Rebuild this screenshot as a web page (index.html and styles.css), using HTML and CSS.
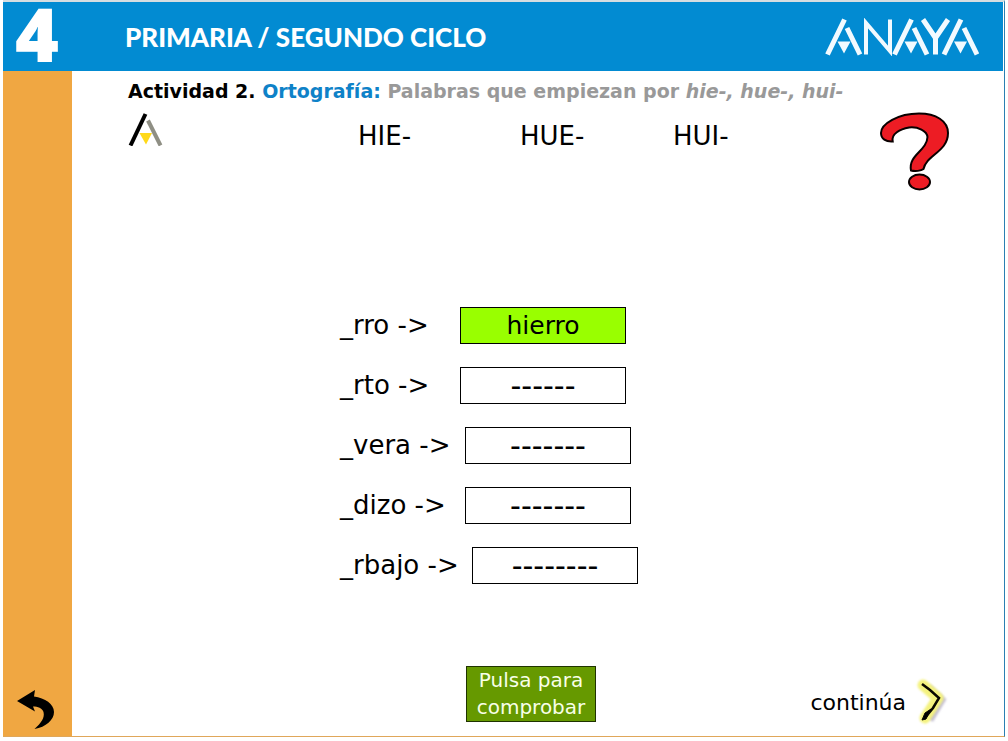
FILE: index.html
```html
<!DOCTYPE html>
<html lang="es">
<head>
<meta charset="utf-8">
<meta name="viewport" content="width=device-width, initial-scale=1">
<title>Primaria / Segundo ciclo - Ortografía</title>
<link rel="stylesheet" href="styles.css">
</head>
<body>
<div class="page">
  <header class="header">
    <span class="grade">4</span>
    <span class="cycle">PRIMARIA / SEGUNDO CICLO</span>
    <svg class="brand" viewBox="0 0 154 38" role="img" aria-label="Anaya">
      <g fill="none" stroke="#f2faff" stroke-width="5">
        <path d="M2.500 36.500 19.500 1.500M22 10 35 36.500"/>
        <path stroke-width="4" d="M41 36.500V5L65 33V1.500"/>
        <path d="M69.500 36.500 86.500 1.500M89 10 102 36.500"/>
        <path d="M98 1.500 110.500 20 123 1.500M110.500 19V36.500"/>
        <path d="M119 36.500 136 1.500M139 10 152 36.500"/>
      </g>
      <path fill="#f2faff" d="M12.500 23.500H25.500L19 35.500ZM79.500 23.500H92.500L86 35.500ZM129 23.500H142L135.500 35.500Z"/>
    </svg>
  </header>
  <div class="body">
    <nav class="side">
      <a href="#volver" aria-label="Volver">
        <svg class="back" viewBox="0 0 38 40">
          <path d="M3 11 21 0 20 6.500C31 8 40 14 40 22 40 30 32 37 20.500 39 27 33 31 28 29.500 22 28 18 24 16.500 19 16.500L21 21.500Z"/>
        </svg>
      </a>
    </nav>
    <main class="main">
      <h1 class="title">Actividad 2. <span class="topic">Ortografía:</span> <span class="desc">Palabras que empiezan por <em>hie-, hue-, hui-</em></span></h1>
      <div class="prefixes">
        <svg class="mark" viewBox="0 0 36 34">
          <path d="M2.500 33.500 17.500 2" fill="none" stroke="#000" stroke-width="4"/>
          <path d="M20 8.500 32.500 33.500" fill="none" stroke="#8f8f84" stroke-width="4"/>
          <path d="M11.500 21H24L18 32.500Z" fill="#ffd91a"/>
        </svg>
        <div class="prefix-list">
          <span>HIE-</span>
          <span>HUE-</span>
          <span>HUI-</span>
        </div>
        <button class="help" type="button" aria-label="Ayuda">
          <svg viewBox="0 0 70 80">
            <g fill="#ed1c24" stroke="#0a0000" stroke-width="2">
              <path d="M12.700 29.500C6 30 1 27 1 21 1 12 18 1.500 39 1.500 56 1.500 68 9 68 21 68 40 46 43 43.500 57 41 59 35 59.500 31 58.500 28 43 47 39 47.500 25 47 19 38 14.500 29 15.500 20 17 11 22 12.700 29.500Z"/>
              <ellipse cx="39.500" cy="70" rx="10.500" ry="7.500"/>
            </g>
          </svg>
        </button>
      </div>
      <form class="words">
        <div class="word"><label for="w1">_rro -&gt;</label><input id="w1" class="slot done" readonly value="hierro"></div>
        <div class="word"><label for="w2">_rto -&gt;</label><input id="w2" class="slot" readonly value="------"></div>
        <div class="word medium"><label for="w3">_vera -&gt;</label><input id="w3" class="slot" readonly value="-------"></div>
        <div class="word medium"><label for="w4">_dizo -&gt;</label><input id="w4" class="slot" readonly value="-------"></div>
        <div class="word long"><label for="w5">_rbajo -&gt;</label><input id="w5" class="slot" readonly value="--------"></div>
      </form>
      <div class="actions">
        <button class="check" type="button">Pulsa para comprobar</button>
        <a class="next" href="#continuar">continúa
          <svg viewBox="0 0 34 50">
            <path class="shade" d="M12 10 26 23 14 43" fill="none" stroke="#c4bfd2" stroke-width="7"/>
            <path class="glow" d="M7 8 22 21 9 41" fill="none" stroke="#f4f27e" stroke-width="11" stroke-linejoin="round" stroke-linecap="round"/>
            <path d="M6 7 14 13 23 21 17 31 8 42" fill="none" stroke="#0a0800" stroke-width="2.500"/>
            <path d="M15 32 9 36 6 43 10 42Z" stroke="#0a0800" stroke-width="1"/>
          </svg>
        </a>
      </div>
    </main>
  </div>
</div>
</body>
</html>
```
FILE: styles.css
```css
* {
  box-sizing: border-box;
}

body {
  margin: 0;
  background: #fff;
  color: #000;
  font-family: Verdana, "DejaVu Sans", sans-serif;
}

.page {
  display: flex;
  flex-direction: column;
  min-height: calc(100vh - 4px);
  margin: 0 3px 4px;
  border-top: 2px solid #d6dde1;
  border-right: 1px solid #2a7fb3;
  border-bottom: 1px solid #e0a75a;
}

.header {
  display: flex;
  align-items: center;
  height: 69px;
  margin-right: 1px;
  padding: 0 24px 0 12px;
  background: #028bd2;
  color: #fff;
}

.grade {
  align-self: flex-start;
  width: 110px;
  font: 800 75px/62px "Open Sans", sans-serif;
}

.cycle {
  font: 900 26px/32px Lato, sans-serif;
}

.brand {
  width: 154px;
  height: 38px;
  margin-left: auto;
}

.body {
  display: flex;
  flex: 1;
}

.side {
  display: flex;
  flex-direction: column;
  justify-content: flex-end;
  width: 69px;
  padding: 0 0 6px 11px;
  background: #f0a742;
}

.back {
  display: block;
  width: 38px;
  height: 40px;
  overflow: visible;
}

.main {
  display: flex;
  flex: 1;
  flex-direction: column;
  padding: 8px 54px 6px 56px;
}

.title {
  margin: 0;
  font-size: 19px;
  line-height: 24px;
}

.topic {
  color: #0e82c8;
}

.desc {
  color: #999;
}

.prefixes {
  display: flex;
  align-items: flex-start;
  margin-top: 9px;
}

.mark {
  width: 36px;
  height: 34px;
  margin-right: 194px;
}

.prefix-list {
  display: grid;
  grid-template-columns: 162px 153px auto;
  font-size: 26px;
  line-height: 48px;
}

.help {
  margin-left: auto;
  padding: 0;
  border: 0;
  background: none;
  cursor: pointer;
}

.help svg {
  display: block;
  width: 70px;
  height: 80px;
}

.words {
  margin: 103px 0 auto 212px;
}

.word {
  display: flex;
  align-items: center;
  height: 60px;
  font-size: 26px;
}

.word label {
  width: 120px;
  white-space: nowrap;
}

.medium label {
  width: 125px;
}

.long label {
  width: 132px;
}

.slot {
  width: 166px;
  height: 37px;
  padding: 0;
  border: 1px solid #000;
  background: #fff;
  color: #000;
  font: 30px "DejaVu Sans", sans-serif;
  text-align: center;
}

.done {
  background: #9f0;
  font-size: 25px;
}

.actions {
  display: flex;
  align-items: flex-end;
  height: 64px;
  padding: 0 0 3px 338px;
}

.check {
  align-self: flex-start;
  width: 130px;
  height: 56px;
  padding: 0;
  border: 1px solid #1f3300;
  background: #690;
  color: #f8ffe8;
  font: 20px/27px "DejaVu Sans", sans-serif;
  cursor: pointer;
}

.next {
  display: flex;
  align-items: center;
  gap: 10px;
  margin-left: auto;
  color: #000;
  font-size: 22px;
  text-decoration: none;
}

.next svg {
  width: 34px;
  height: 50px;
  overflow: visible;
}

.glow,
.shade {
  filter: blur(1px);
}
```
